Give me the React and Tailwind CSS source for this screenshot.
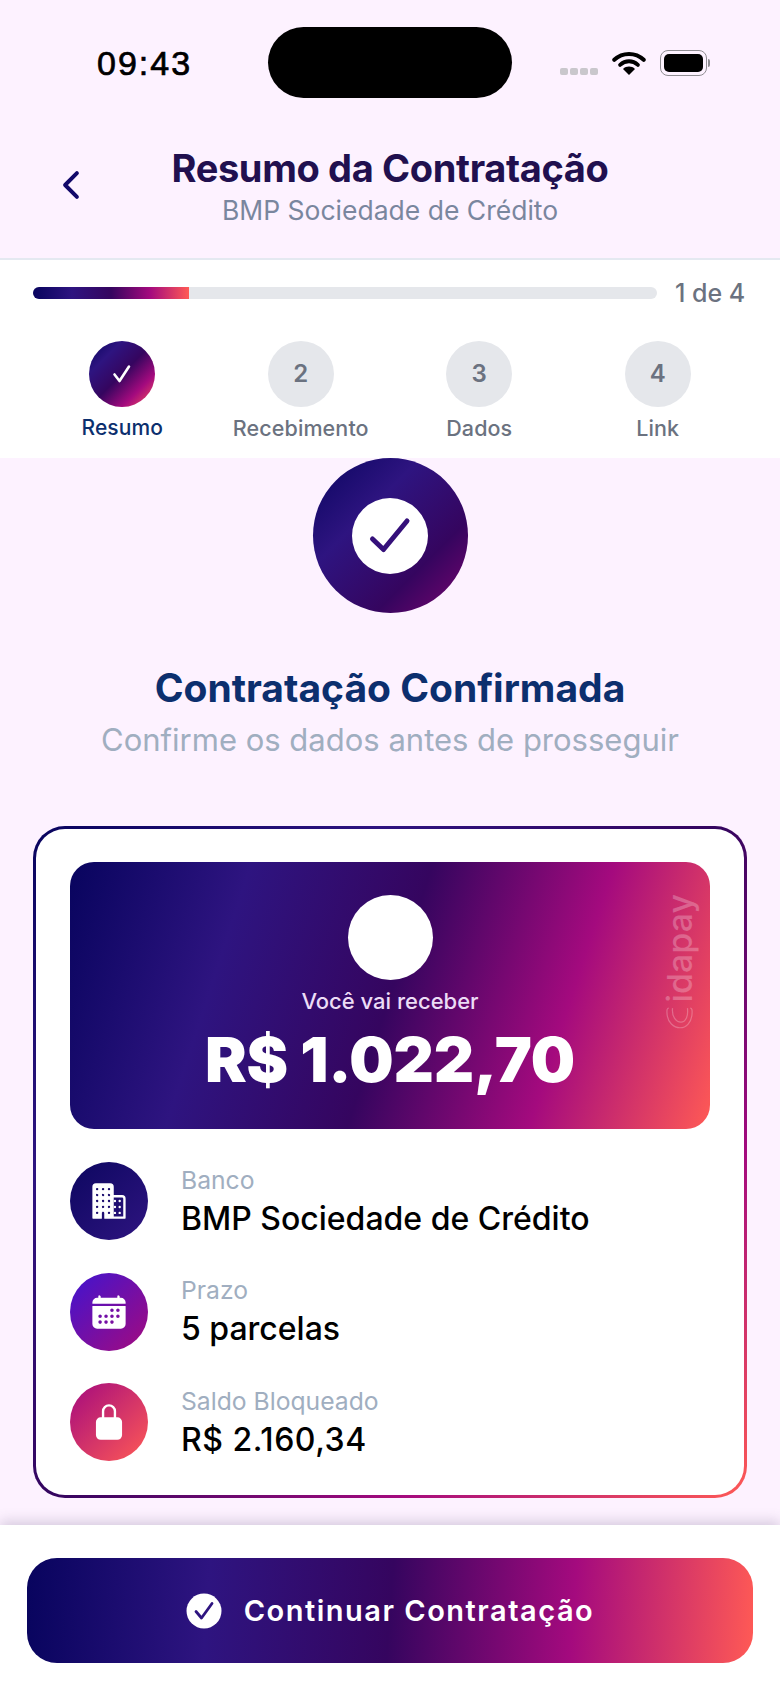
import React from "react";
import { IoBusiness, IoCalendar, IoLockClosed, IoChevronBack } from "react-icons/io5";

const INTER = "font-['Inter',sans-serif]";
const G5 = "#08045e 0%, #2e1480 25%, #35055f 50%, #a40a7e 75%, #ff5a55 100%";

function StatusBar() {
  return (
    <div className="relative flex h-[122px] items-start">
      <div className="ml-[97px] mt-[44px] w-[92px] font-['Liberation_Sans',sans-serif] text-[34px] leading-[38px] tracking-[2px] text-black [-webkit-text-stroke:0.7px_black]">09:43</div>
      <div className="ml-[79px] mt-[27px] h-[71px] w-[244px] rounded-[36px] bg-black" />
      <div className="ml-[48px] mt-[68px] flex gap-[2.5px]">
        {[0, 1, 2, 3].map((i) => (
          <div key={i} className="h-[7px] w-[7.5px] rounded-[2px] bg-[#c9c7cc]" />
        ))}
      </div>
      <svg className="ml-[14px] mt-[50px]" width="34" height="26" viewBox="0 0 37 26" fill="none">
        <path d="M2.5 9.5C11.5 1 25.5 1 34.5 9.5" stroke="#000" strokeWidth="4.4" strokeLinecap="round" />
        <path d="M8.8 15C14.5 9.8 22.5 9.8 28.2 15" stroke="#000" strokeWidth="4.2" strokeLinecap="round" />
        <path d="M18.5 26L12 19.5C15.5 16 21.5 16 25 19.5Z" fill="#000" />
      </svg>
      <div className="ml-[14px] mt-[50px] flex items-center">
        <div className="flex h-[26px] w-[47px] items-center justify-center rounded-[8px] border-[1.5px] border-[#8f8d92]">
          <div className="h-[18px] w-[39px] rounded-[5px] bg-black" />
        </div>
        <div className="ml-[1px] h-[8px] w-[2px] rounded-r-full bg-[#8f8d92]" />
      </div>
    </div>
  );
}

function Header() {
  return (
    <div className="relative h-[138px] border-b-2 border-[#e4e9f1] bg-[#fdf2ff]">
      <div className={`pt-[22px] text-center ${INTER}`}>
        <div className="text-[38px] leading-[48px] font-bold tracking-[-0.35px] text-[#21104f]">Resumo da Contratação</div>
        <div className="mt-[1px] text-[26.5px] leading-[34px] text-[#7a869e]">BMP Sociedade de Crédito</div>
      </div>
      <IoChevronBack className="absolute left-[50px] top-[42px] text-[#12086a]" size={42} />
    </div>
  );
}

function Progress() {
  const steps = [
    { n: "2", l: "Recebimento" },
    { n: "3", l: "Dados" },
    { n: "4", l: "Link" },
  ];
  return (
    <div className={`h-[198px] bg-white px-[33px] pt-[27px] ${INTER}`}>
      <div className="flex items-center">
        <div className="h-[12px] w-[624px] overflow-hidden rounded-full bg-[#e5e7eb]">
          <div className="h-full w-1/4" style={{ background: `linear-gradient(90deg, ${G5})` }} />
        </div>
        <div className="ml-[18px] text-[25px] leading-[12px] font-medium text-[#6b7280]">1 de 4</div>
      </div>
      <div className="mt-[42px] grid grid-cols-[178.5px_178.5px_178.5px_178.5px]">
        <div className="flex flex-col items-center">
          <div className="flex h-[66px] w-[66px] items-center justify-center rounded-full" style={{ background: `linear-gradient(135deg, ${G5})` }}>
            <svg width="22" height="22" viewBox="0 0 22 22" fill="none">
              <path d="M3.5 11.5L8.5 18L18 3.5" stroke="#fff" strokeWidth="2.6" strokeLinecap="round" strokeLinejoin="round" />
            </svg>
          </div>
          <div className="mt-[7px] text-[21px] leading-[28px] font-medium tracking-[0.1px] text-[#0c2f6e]">Resumo</div>
        </div>
        {steps.map((s) => (
          <div key={s.n} className="flex flex-col items-center">
            <div className="flex h-[66px] w-[66px] items-center justify-center rounded-full bg-[#e5e7eb] text-[24px] font-semibold text-[#6b7280]">{s.n}</div>
            <div className="mt-[7px] text-[21.5px] leading-[28px] font-medium tracking-[0.1px] text-[#6b7280]">{s.l}</div>
          </div>
        ))}
      </div>
    </div>
  );
}

function Hero() {
  return (
    <div className="relative flex h-[267px] flex-col items-center overflow-hidden rounded-[24px] pt-[33px]" style={{ background: `linear-gradient(108deg, ${G5})` }}>
      <div className="h-[85px] w-[85px] rounded-full bg-white" />
      <div className="mt-[7px] text-[22px] leading-[28px] font-medium text-[#ecdcf6]">Você vai receber</div>
      <div className="mt-[8px] text-[62.5px] leading-[72px] font-black tracking-[-0.2px] text-white">R$ 1.022,70</div>
      <div className="absolute right-[13px] top-[32px] flex flex-col items-center text-white/25">
        <div className="rotate-180 text-[34px] leading-[34px] font-medium [writing-mode:vertical-rl]">idapay</div>
        <svg className="mt-[2px]" width="28" height="25" viewBox="0 0 30 26" fill="none" stroke="currentColor" strokeWidth="1.3">
          <path d="M3 3C1 3 1 5 1 7C1 19 9 24 15 24C21 24 28 19 28 7C28 5 28 3 26 3" />
          <path d="M7 3C6 12 11 18 16 18C21 18 24 12 23 3" />
        </svg>
      </div>
    </div>
  );
}

function Row({ grad, icon, label, value, mt, vclass }) {
  return (
    <div className={`flex items-center ${mt}`}>
      <div className="flex h-[78px] w-[78px] items-center justify-center rounded-full" style={{ background: grad }}>
        {icon}
      </div>
      <div className="ml-[33px]">
        <div className="text-[24.7px] leading-[32px] text-[#a0aec0]">{label}</div>
        <div className={`mt-[3px] text-[32px] leading-[40px] font-medium text-black ${vclass}`}>{value}</div>
      </div>
    </div>
  );
}

function Card() {
  return (
    <div className="rounded-[32px] p-[3px]" style={{ background: `linear-gradient(135deg, ${G5})` }}>
      <div className={`h-[666px] rounded-[29px] bg-white px-[34px] pt-[33px] ${INTER}`}>
        <Hero />
        <Row
          mt="mt-[33px]"
          grad="linear-gradient(135deg, #0d0760, #2e1480)"
          icon={<IoBusiness className="text-white" size={38} />}
          label="Banco"
          value="BMP Sociedade de Crédito"
          vclass=""
        />
        <Row
          mt="mt-[32.5px]"
          grad="linear-gradient(135deg, #3f14d0, #a40a7e)"
          icon={<IoCalendar className="text-white" size={38} />}
          label="Prazo"
          value="5 parcelas"
          vclass=""
        />
        <Row
          mt="mt-[32.5px]"
          grad="linear-gradient(135deg, #a40a7e, #ff5a55)"
          icon={<IoLockClosed className="text-white" size={38} />}
          label="Saldo Bloqueado"
          value="R$ 2.160,34"
          vclass="tracking-[0.55px]"
        />
      </div>
    </div>
  );
}

function Footer() {
  return (
    <div className="relative flex-1 bg-white px-[27px] pt-[33px] shadow-[0_-4px_12px_rgba(80,70,110,0.22)]">
      <div className="flex h-[105px] items-center justify-center rounded-[30px]" style={{ background: `linear-gradient(94deg, ${G5})` }}>
        <svg width="36" height="36" viewBox="0 0 36 36">
          <circle cx="18" cy="18" r="17.5" fill="#fff" />
          <path d="M10 18.5L15.5 25L26 10.5" fill="none" stroke="#2e1480" strokeWidth="2.8" strokeLinecap="round" strokeLinejoin="round" />
        </svg>
        <div className={`ml-[22px] text-[29px] leading-[36px] font-semibold tracking-[1.5px] text-white ${INTER}`}>Continuar Contratação</div>
      </div>
    </div>
  );
}

export default function App() {
  return (
    <div className="flex h-[1696px] w-[780px] flex-col overflow-hidden bg-[#fdf2ff]">
      <StatusBar />
      <Header />
      <Progress />
      <div className={`flex h-[1067px] flex-col items-center bg-[#fdf2ff] ${INTER}`}>
        <div className="flex h-[155px] w-[155px] items-center justify-center rounded-full" style={{ background: "linear-gradient(135deg, #0a0560 0%, #2e1480 35%, #35055f 70%, #7a0570 100%)" }}>
          <div className="flex h-[76px] w-[76px] items-center justify-center rounded-full bg-white">
            <svg width="44" height="38" viewBox="0 0 44 38" fill="none">
              <path d="M4.5 22L15.5 32.5L39 4" stroke="#35107a" strokeWidth="5" strokeLinecap="round" strokeLinejoin="round" />
            </svg>
          </div>
        </div>
        <div className="mt-[51px] text-[39px] leading-[48px] font-bold text-[#0c2f6e]">Contratação Confirmada</div>
        <div className="mt-[8px] text-[31px] leading-[40px] text-[#a0aec0]">Confirme os dados antes de prosseguir</div>
        <div className="mt-[66px] w-[714px]">
          <Card />
        </div>
      </div>
      <Footer />
    </div>
  );
}
